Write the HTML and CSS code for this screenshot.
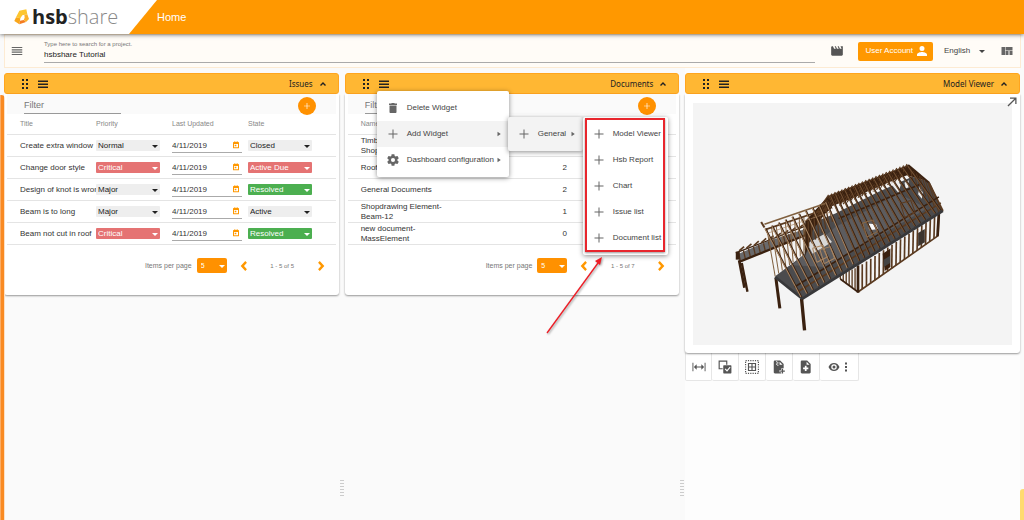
FILE: index.html
```html
<!DOCTYPE html>
<html lang="en">
<head>
<meta charset="utf-8">
<title>hsbshare</title>
<link rel="stylesheet" href="styles.css">
</head>
<body>
<svg class="sprite" aria-hidden="true">
  <symbol id="i-menu" viewBox="0 0 24 24"><path d="M3 5h18v2H3zM3 9h18v2H3zM3 13h18v2H3zM3 17h18v2H3z"/></symbol>
  <symbol id="i-bars" viewBox="0 0 24 24"><path d="M2 5h20v3H2zM2 11h20v3H2zM2 17h20v3H2z"/></symbol>
  <symbol id="i-drag" viewBox="0 0 16 24"><path d="M2 2h4v4H2zM10 2h4v4h-4zM2 10h4v4H2zM10 10h4v4h-4zM2 18h4v4H2zM10 18h4v4h-4z"/></symbol>
  <symbol id="i-up" viewBox="0 0 24 24"><path d="M12 6l-9 9 3 3 6-6 6 6 3-3z"/></symbol>
  <symbol id="i-left" viewBox="0 0 24 24"><path d="M19 4l-4-4L4 12l11 12 4-4-7-8z"/></symbol>
  <symbol id="i-right" viewBox="0 0 24 24"><path d="M5 4l4-4 11 12L9 24l-4-4 7-8z"/></symbol>
  <symbol id="i-plus" viewBox="0 0 24 24"><path d="M21 13h-8v8h-2v-8H3v-2h8V3h2v8h8z"/></symbol>
  <symbol id="i-trash" viewBox="0 0 24 24"><path d="M5 20c0 1.100.9 2 2 2h10c1.100 0 2-.9 2-2V7H5zM20 3h-4.500l-1-1h-5l-1 1H4v3h16z"/></symbol>
  <symbol id="i-gear" viewBox="0 0 24 24"><path fill-rule="evenodd" d="M19.430 12.980c.04-.32.07-.64.07-.98s-.03-.66-.07-.98l2.110-1.650c.19-.15.24-.42.12-.64l-2-3.460c-.12-.22-.39-.3-.61-.22l-2.490 1c-.52-.4-1.080-.73-1.690-.98l-.38-2.650C14.460 2.180 14.250 2 14 2h-4c-.25 0-.46.18-.49.42l-.38 2.650c-.61.25-1.170.59-1.690.98l-2.490-1c-.23-.09-.49 0-.61.22l-2 3.460c-.13.22-.07.49.12.64l2.110 1.650c-.04.32-.07.65-.07.98s.03.66.07.98l-2.110 1.650c-.19.15-.24.42-.12.64l2 3.460c.12.22.39.3.61.22l2.490-1c.52.4 1.080.73 1.690.98l.38 2.650c.03.24.24.42.49.42h4c.25 0 .46-.18.49-.42l.38-2.650c.61-.25 1.170-.59 1.690-.98l2.490 1c.23.09.49 0 .61-.22l2-3.460c.12-.22.07-.49-.12-.64zM12 15.500a3.500 3.500 0 1 1 0-7 3.500 3.500 0 0 1 0 7z"/></symbol>
  <symbol id="i-play" viewBox="0 0 24 24"><path d="M6 3l13 9-13 9z"/></symbol>
  <symbol id="i-movie" viewBox="0 0 24 24"><path d="M18 4l2 4h-3l-2-4h-2l2 4h-3l-2-4H8l2 4H7L5 4H4c-1.100 0-2 .9-2 2v12c0 1.100.9 2 2 2h16c1.100 0 2-.9 2-2V4z"/></symbol>
  <symbol id="i-person" viewBox="0 0 24 24"><path d="M12 12a5 5 0 1 0 0-10 5 5 0 0 0 0 10zm0 2c-3.300 0-10 1.700-10 5v3h20v-3c0-3.300-6.700-5-10-5z"/></symbol>
  <symbol id="i-quilt" viewBox="0 0 24 24"><path d="M1 4h7v16H1zM9 12h6v8H9zM17 12h6v8h-6zM9 4h14v7H9z"/></symbol>
  <symbol id="i-cal" viewBox="0 0 24 24"><path fill-rule="evenodd" d="M19 3h-2V1h-3v2h-4V1H7v2H5c-1.100 0-2 .9-2 2v15c0 1.100.9 2 2 2h14c1.100 0 2-.9 2-2V5c0-1.100-.9-2-2-2zm-1 16H6V9h12zM8 11h5v5H8z"/></symbol>
  <symbol id="i-expand" viewBox="0 0 24 24"><path d="M8 3h13v13h-2.500V7.300L4.800 21 3 19.200 16.700 5.500H8z"/></symbol>
  <symbol id="i-width" viewBox="0 0 30 24"><path d="M1 3h2v18H1zM27 3h2v18h-2zM4 12l6-6v5h10V6l6 6-6 6v-5H10v5z"/></symbol>
  <symbol id="i-select" viewBox="0 0 24 24"><path fill-rule="evenodd" d="M1 1h15v7h-2V3H3v11h5v2H1zM10 9h12c.6 0 1 .4 1 1v12c0 .6-.4 1-1 1H10c-.6 0-1-.4-1-1V10c0-.6.4-1 1-1zm1.500 7l4 4 6-7-1.500-1.300-4.600 5.300-2.500-2.500z"/></symbol>
  <symbol id="i-area" viewBox="0 0 24 24"><path fill-rule="evenodd" d="M5 5h14v14H5zm2 2v4h4V7zm6 0v4h4V7zm-6 6v4h4v-4zm6 0v4h4v-4z"/><path fill="none" stroke="currentColor" stroke-width="2" stroke-dasharray="2 2" d="M1 1h22v22H1z"/></symbol>
  <symbol id="i-zip" viewBox="0 0 24 24"><path fill-rule="evenodd" d="M5 1h9l6 6v7h-4v3h-3v4h3v2H5c-1 0-2-1-2-2V3c0-1 1-2 2-2zm8 2v5h5zM7 2h2v2H7zm2 2h2v2H9zM7 6h2v2H7zm2 2h2v2H9z"/><path d="M17 15h2v3h3v2h-3v3h-2v-3h-3v-2h3z"/></symbol>
  <symbol id="i-file" viewBox="0 0 24 24"><path fill-rule="evenodd" d="M5 1h9l6 6v14c0 1-1 2-2 2H5c-1 0-2-1-2-2V3c0-1 1-2 2-2zm8 2v5h5zm-3 7v3H7v3h3v3h3v-3h3v-3h-3v-3z"/></symbol>
  <symbol id="i-eye" viewBox="0 0 24 24"><path fill-rule="evenodd" d="M12 4C7 4 2.700 7.300 1 12c1.700 4.700 6 8 11 8s9.300-3.300 11-8c-1.700-4.700-6-8-11-8zm0 13.500a5.500 5.500 0 1 1 0-11 5.500 5.500 0 0 1 0 11zM12 9a3 3 0 1 0 0 6 3 3 0 0 0 0-6z"/></symbol>
  <symbol id="i-more" viewBox="0 0 8 24"><path d="M2 3h4v4H2zM2 10h4v4H2zM2 17h4v4H2z"/></symbol>
</svg>

<header class="header">
  <a class="logo" href="#" aria-label="hsbshare">
    <svg class="logo-mark" viewBox="0 0 45 48" aria-hidden="true">
      <path fill="#fdc62f" d="M16 5L37 1l3 15-15 3-6 9-13-3z"/><path fill="#f9a61a" d="M6 25l13 3-1 7-2 11L1 36z"/><path fill="#f47c20" d="M16 46l2-11 11-2 7 6z"/><path fill="#fbb02a" d="M40 16l5 14-9 9-7-6 3-7-1-9z"/>
    </svg>
    <span class="logo-text"><b>hsb</b><span>share</span></span>
  </a>
  <nav><a class="nav-link" href="#">Home</a></nav>
</header>

<section class="toolbar">
  <button class="icon-button" aria-label="Menu"><svg class="icon i14"><use href="#i-menu"/></svg></button>
  <div class="search">
    <label for="project">Type here to search for a project.</label>
    <input id="project" type="text" value="hsbshare Tutorial">
  </div>
  <button class="icon-button movie" aria-label="Videos"><svg class="icon i14"><use href="#i-movie"/></svg></button>
  <button class="account">User Account <svg class="icon i12"><use href="#i-person"/></svg></button>
  <span class="select language"><select aria-label="Language"><option>English</option></select></span>
  <button class="icon-button" aria-label="Layout"><svg class="icon i12"><use href="#i-quilt"/></svg></button>
</section>

<main class="dashboard">
  <section class="panel">
    <header class="panel-bar">
      <button class="icon-button" aria-label="Move"><svg class="icon drag"><use href="#i-drag"/></svg></button>
      <button class="icon-button" aria-label="Widget menu"><svg class="icon i12"><use href="#i-bars"/></svg></button>
      <h2>Issues</h2>
      <button class="icon-button" aria-label="Collapse"><svg class="icon i8"><use href="#i-up"/></svg></button>
    </header>
    <div class="card">
      <div class="filter"><input type="text" placeholder="Filter" aria-label="Filter issues"><button class="add" aria-label="Add issue"><svg class="icon i8"><use href="#i-plus"/></svg></button></div>
      <table class="issues">
        <thead><tr><th>Title</th><th>Priority</th><th>Last Updated</th><th>State</th></tr></thead>
        <tbody>
          <tr><td>Create extra window</td><td><span class="select"><select aria-label="Priority"><option>Normal</option></select></span></td><td><span class="date"><input type="text" value="4/11/2019" aria-label="Last updated"><button class="icon-button" aria-label="Pick date"><svg class="icon i8"><use href="#i-cal"/></svg></button></span></td><td><span class="select"><select aria-label="State"><option>Closed</option></select></span></td></tr>
          <tr><td>Change door style</td><td><span class="select red"><select aria-label="Priority"><option>Critical</option></select></span></td><td><span class="date"><input type="text" value="4/11/2019" aria-label="Last updated"><button class="icon-button" aria-label="Pick date"><svg class="icon i8"><use href="#i-cal"/></svg></button></span></td><td><span class="select red"><select aria-label="State"><option>Active Due</option></select></span></td></tr>
          <tr><td>Design of knot is wrong</td><td><span class="select"><select aria-label="Priority"><option>Major</option></select></span></td><td><span class="date"><input type="text" value="4/11/2019" aria-label="Last updated"><button class="icon-button" aria-label="Pick date"><svg class="icon i8"><use href="#i-cal"/></svg></button></span></td><td><span class="select green"><select aria-label="State"><option>Resolved</option></select></span></td></tr>
          <tr><td>Beam is to long</td><td><span class="select"><select aria-label="Priority"><option>Major</option></select></span></td><td><span class="date"><input type="text" value="4/11/2019" aria-label="Last updated"><button class="icon-button" aria-label="Pick date"><svg class="icon i8"><use href="#i-cal"/></svg></button></span></td><td><span class="select"><select aria-label="State"><option>Active</option></select></span></td></tr>
          <tr><td>Beam not cut in roof</td><td><span class="select red"><select aria-label="Priority"><option>Critical</option></select></span></td><td><span class="date"><input type="text" value="4/11/2019" aria-label="Last updated"><button class="icon-button" aria-label="Pick date"><svg class="icon i8"><use href="#i-cal"/></svg></button></span></td><td><span class="select green"><select aria-label="State"><option>Resolved</option></select></span></td></tr>
        </tbody>
      </table>
      <footer class="pager">
        <label for="size1">Items per page</label>
        <span class="select orange"><select id="size1"><option>5</option></select></span>
        <button class="icon-button" aria-label="Previous page"><svg class="icon i10"><use href="#i-left"/></svg></button>
        <span class="range">1 - 5 of 5</span>
        <button class="icon-button" aria-label="Next page"><svg class="icon i10"><use href="#i-right"/></svg></button>
      </footer>
    </div>
  </section>

  <div class="gutter"><span class="grip"></span></div>

  <section class="panel">
    <header class="panel-bar">
      <button class="icon-button" aria-label="Move"><svg class="icon drag"><use href="#i-drag"/></svg></button>
      <button class="icon-button" aria-label="Widget menu"><svg class="icon i12"><use href="#i-bars"/></svg></button>
      <h2>Documents</h2>
      <button class="icon-button" aria-label="Collapse"><svg class="icon i8"><use href="#i-up"/></svg></button>
    </header>
    <div class="card">
      <div class="filter"><input type="text" placeholder="Filter" aria-label="Filter documents"><button class="add" aria-label="Add document"><svg class="icon i8"><use href="#i-plus"/></svg></button></div>
      <table class="documents">
        <thead><tr><th>Name</th><th></th><th></th></tr></thead>
        <tbody>
          <tr><td>Timber<br>Shop</td><td></td><td></td></tr>
          <tr><td>Roof</td><td>2</td><td></td></tr>
          <tr><td>General Documents</td><td>2</td><td></td></tr>
          <tr><td>Shopdrawing Element-<br>Beam-12</td><td>1</td><td></td></tr>
          <tr><td>new document-<br>MassElement</td><td>0</td><td></td></tr>
        </tbody>
      </table>
      <footer class="pager">
        <label for="size2">Items per page</label>
        <span class="select orange"><select id="size2"><option>5</option></select></span>
        <button class="icon-button" aria-label="Previous page"><svg class="icon i10"><use href="#i-left"/></svg></button>
        <span class="range">1 - 5 of 7</span>
        <button class="icon-button" aria-label="Next page"><svg class="icon i10"><use href="#i-right"/></svg></button>
      </footer>
    </div>

    <div class="menu menu-root">
      <button class="menu-item"><svg class="icon i12"><use href="#i-trash"/></svg><span>Delete Widget</span></button>
      <button class="menu-item active"><svg class="icon i12"><use href="#i-plus"/></svg><span>Add Widget</span><svg class="icon i6"><use href="#i-play"/></svg></button>
      <button class="menu-item"><svg class="icon i14"><use href="#i-gear"/></svg><span>Dashboard configuration</span><svg class="icon i6"><use href="#i-play"/></svg></button>
    </div>
    <div class="menu menu-general">
      <button class="menu-item active"><svg class="icon i12"><use href="#i-plus"/></svg><span>General</span><svg class="icon i6"><use href="#i-play"/></svg></button>
    </div>
    <div class="menu menu-widgets">
      <button class="menu-item"><svg class="icon i12"><use href="#i-plus"/></svg><span>Model Viewer</span></button>
      <button class="menu-item"><svg class="icon i12"><use href="#i-plus"/></svg><span>Hsb Report</span></button>
      <button class="menu-item"><svg class="icon i12"><use href="#i-plus"/></svg><span>Chart</span></button>
      <button class="menu-item"><svg class="icon i12"><use href="#i-plus"/></svg><span>Issue list</span></button>
      <button class="menu-item"><svg class="icon i12"><use href="#i-plus"/></svg><span>Document list</span></button>
      <span class="highlight"></span>
    </div>
    <svg class="pointer" viewBox="0 0 60 80" aria-hidden="true"><path stroke="#ee1c25" stroke-width="1.300" d="M2 77L53 7"/><path fill="#ee1c25" d="M57 1l-2 8-5-4z"/></svg>
  </section>

  <div class="gutter"><span class="grip"></span></div>

  <section class="panel viewer">
    <header class="panel-bar">
      <button class="icon-button" aria-label="Move"><svg class="icon drag"><use href="#i-drag"/></svg></button>
      <button class="icon-button" aria-label="Widget menu"><svg class="icon i12"><use href="#i-bars"/></svg></button>
      <h2>Model Viewer</h2>
      <button class="icon-button" aria-label="Collapse"><svg class="icon i8"><use href="#i-up"/></svg></button>
    </header>
    <div class="card viewer-card">
      <svg class="model" id="model" viewBox="-96 -141 954 726" role="img" aria-label="Timber frame house"></svg>
      <button class="icon-button expand" aria-label="Full screen"><svg class="icon i12"><use href="#i-expand"/></svg></button>
    </div>
    <div class="tools">
      <button aria-label="Measure"><svg class="icon i14"><use href="#i-width"/></svg></button>
      <button aria-label="Select"><svg class="icon i14"><use href="#i-select"/></svg></button>
      <button aria-label="Select all"><svg class="icon i14"><use href="#i-area"/></svg></button>
      <button aria-label="Add archive"><svg class="icon i14"><use href="#i-zip"/></svg></button>
      <button aria-label="Add file"><svg class="icon i14"><use href="#i-file"/></svg></button>
      <button class="wide" aria-label="Visibility"><svg class="icon i12"><use href="#i-eye"/></svg><svg class="icon more"><use href="#i-more"/></svg></button>
    </div>
  </section>
</main>
<span class="edge-left"></span>
<span class="edge-right"></span>
<script src="model.js"></script>
</body>
</html>
```

FILE: styles.css
```css
* { box-sizing: border-box; }
body {
  margin: 0;
  min-height: 100vh;
  display: flex;
  flex-direction: column;
  background: #fafafa;
  color: #333;
  font: 8px/10px "Liberation Sans", Arial, sans-serif;
}
button, input, select { font: inherit; color: inherit; border: 0; padding: 0; margin: 0; background: none; border-radius: 0; min-width: 0; }
input, select { outline: 0; }
a { text-decoration: none; }
.sprite { position: absolute; width: 0; height: 0; }
.icon { fill: currentColor; display: block; flex: none; }
.i6 { width: 6px; height: 6px; }
.i8 { width: 8px; height: 8px; }
.i10 { width: 10px; height: 10px; }
.i12 { width: 12px; height: 12px; }
.i14 { width: 14px; height: 14px; }
.drag { width: 8px; height: 12px; }
.icon-button { display: flex; align-items: center; flex: none; }

.header { display: flex; align-items: center; height: 34px; background: #ff9800; box-shadow: 0 1px 4px rgba(0, 0, 0, .5); position: relative; z-index: 1; }
.logo { display: flex; align-items: center; gap: 3px; width: 157px; height: 34px; padding-left: 14px; background: #fff; clip-path: polygon(0 0, 100% 0, 129px 100%, 0 100%); }
.logo-mark { width: 15px; height: 16px; }
.logo-text { display: flex; font: 20px/32px "Open Sans", "Noto Sans", sans-serif; color: #888; }
.logo-text b { color: #222; }
.logo-text span { font-weight: 300; }
.nav-link { color: #fff; font-size: 11px; line-height: 14px; }

.toolbar { display: flex; align-items: center; margin: 0 3px 0 4px; height: 34px; padding: 0 7px 0 5px; background: #fffcf7; border: 1px solid #fdebd3; color: #666; }
.search { flex: 1; margin: 0 15px 0 20px; display: flex; flex-direction: column; }
.search label { font-size: 6px; line-height: 8px; color: #777; }
.search input { height: 15px; width: 100%; color: #222; border-bottom: 1px solid #aaa; }
.movie { margin-right: 14px; color: #555; }
.account { display: flex; align-items: center; gap: 3px; height: 19px; padding: 0 5px 0 7px; background: #ff9800; color: #fff; border-radius: 2px; white-space: nowrap; }
.select { display: block; position: relative; width: 64px; background: #eee; color: #222; border-radius: 1px; }
.select select { display: block; width: 100%; height: 11px; padding: 0 0 0 2px; appearance: none; }
.select::after { content: ""; position: absolute; right: 2px; top: 50%; margin-top: -1px; border: 3px solid transparent; border-top-color: currentColor; border-bottom: 0; pointer-events: none; }
.select.red { background: #e57373; color: #fff; }
.select.green { background: #4caf50; color: #fff; }
.select.orange { background: #ff9100; color: #fff; width: 30px; border-radius: 2px; }
.select.orange select { height: 15px; padding-left: 4px; font-size: 7px; }
.select.language { background: none; width: 41px; margin: 0 16px 0 11px; color: #444; }
.select.language select { padding: 0; }
.select.language::after { right: 0; }

.dashboard { flex: 1; display: grid; grid-template-columns: minmax(0, 1fr) 6px minmax(0, 1fr) 6px minmax(0, 1fr); margin: 0 4px; }
.panel { position: relative; padding-top: 5px; }
.viewer { background: #fdfdfd; }
.panel-bar { display: flex; align-items: center; height: 21px; padding: 0 11px 0 16px; gap: 8px; background: #ffb733; border: 1px solid #ffa51f; border-radius: 3px; color: #222; }
.panel-bar h2 { flex: 1; margin: 0; text-align: right; font: 8px/12px "Noto Sans", "Open Sans", sans-serif; }
.panel-bar h2 + .icon-button { margin-left: -2px; }
.card { background: #fff; padding: 0 3px 22px; border-radius: 0 0 3px 3px; box-shadow: 0 1px 2px rgba(0, 0, 0, .4); }
.filter { display: flex; justify-content: space-between; height: 20px; padding: 3px 20px 0 17px; background: #fafafa; }
.filter input { width: 97px; height: 17px; font-size: 9px; border-bottom: 1px solid #999; color: #777; }
.filter input::placeholder { color: #777; opacity: 1; }
.add { display: flex; align-items: center; justify-content: center; width: 18px; height: 18px; border-radius: 50%; background: #ff9100; color: #fff; }

table { width: 100%; border-collapse: separate; border-spacing: 0; table-layout: fixed; }
th { height: 21px; padding: 0; border-bottom: 1px solid #e4e4e4; text-align: left; font-weight: 400; font-size: 7px; color: #888; }
td { height: 22px; padding: 0; border-bottom: 1px solid #e4e4e4; white-space: nowrap; }
th:first-child, td:first-child { padding-left: 13px; width: 89px; }
.issues th:nth-child(2), .issues th:nth-child(3) { width: 76px; }
.date { display: flex; align-items: center; justify-content: space-between; width: 70px; height: 14px; padding-right: 2px; border-bottom: 1px solid #aaa; color: #333; }
.date input { width: 48px; height: 12px; }
.date .icon { color: #ff9800; }
.documents th:first-child { width: 197px; }
.documents th:nth-child(2) { width: 40px; }
.documents td:nth-child(2) { text-align: center; }

.pager { display: flex; align-items: center; justify-content: flex-end; padding: 13px 10px 0 0; font-size: 7px; color: #777; }
.pager label { margin-right: 5px; }
.pager .icon-button { color: #ff9800; }
.pager .select { margin-right: 12px; }
.range { width: 67px; text-align: center; font-size: 6px; }

.menu { position: absolute; z-index: 2; background: #fff; border-radius: 2px; box-shadow: 0 1px 5px rgba(0, 0, 0, .45); color: #444; }
.menu-root { left: 32px; top: 23px; width: 132px; padding: 4px 0; }
.menu-general { left: 163px; top: 49px; width: 75px; padding: 4px 0; background: #f3f3f3; }
.menu-widgets { left: 238px; top: 49px; width: 85px; padding: 4px 0; }
.menu-item { display: flex; align-items: center; width: 100%; height: 26px; padding: 0 7px 0 10px; gap: 8px; text-align: left; white-space: nowrap; }
.menu-item span { flex: 1; }
.menu-item .icon { color: #666; }
.menu-item .i14 { margin: 0 -1px; }
.menu-item.active { background: #f3f3f3; }
.menu-item .i6 { margin-left: -6px; }
.highlight { position: absolute; inset: 1px 3px 3px 2px; border: 2px solid #e8262d; box-shadow: 0 1px 2px rgba(0, 0, 0, .4); pointer-events: none; }
.pointer { position: absolute; z-index: 3; left: 200px; top: 188px; width: 60px; height: 80px; filter: drop-shadow(1px 1px 1px rgba(0, 0, 0, .4)); pointer-events: none; }

.gutter { display: flex; align-items: flex-end; justify-content: center; padding-bottom: 22px; }
.grip { width: 4px; height: 18px; background: repeating-linear-gradient(#ccc 0 1px, transparent 1px 3px); }

.viewer-card { position: relative; padding: 9px 8px 8px; }
.model { display: block; width: 100%; background: #f4f4f4; }
.expand { position: absolute; right: 2px; top: 2px; color: #555; }
.tools { display: flex; }
.tools button { display: flex; align-items: center; justify-content: center; gap: 4px; width: 27px; height: 28px; background: #fff; border: 1px solid #e6e6e6; border-top: 0; border-left-width: 0; border-radius: 0 0 2px 2px; color: #555; }
.tools button:first-child { border-left-width: 1px; }
.tools .wide { width: 39px; padding-right: 3px; }
.more { width: 4px; height: 12px; }

.edge-left { position: absolute; left: 0; top: 95px; bottom: 0; width: 5px; background: linear-gradient(90deg, #fbad66 0 1px, #f98a22 1px 4px, #fde0c4 4px); border-radius: 0 4px 0 0; }
.edge-right { position: absolute; right: 0; bottom: 0; width: 4px; height: 31px; background: #ffdb70; border-radius: 3px 0 0 0; }
```

FILE: model.js
```js
const svg = document.getElementById("model");
const NS = "http://www.w3.org/2000/svg";
const dark = "#3a2110", mid = "#5a3a20", light = "#a98663", slate = "#4b4b4d";

function poly(points, fill) {
  const p = document.createElementNS(NS, "polygon");
  p.setAttribute("points", points);
  p.setAttribute("fill", fill);
  svg.append(p);
}
function line(x1, y1, x2, y2, color, width) {
  const l = document.createElementNS(NS, "path");
  l.setAttribute("d", `M${x1} ${y1}L${x2} ${y2}`);
  l.setAttribute("stroke", color);
  l.setAttribute("stroke-width", width);
  svg.append(l);
}
const mix = (a, b, t) => a + (b - a) * t;

// A row of members spread between a top edge and a bottom edge.
function row(count, top, bottom, color, width) {
  for (let i = 0; i <= count; i++) {
    const t = i / count;
    line(mix(top[0], top[2], t), mix(top[1], top[3], t), mix(bottom[0], bottom[2], t), mix(bottom[1], bottom[3], t), color, width);
  }
}

// Canopy on the left
poly("38,312 125,274 235,238 238,252 130,298 44,334", "#69696b");
row(13, [40, 306, 235, 236], [46, 332, 240, 256], mid, 4);
line(32, 308, 240, 228, dark, 4);
line(42, 335, 242, 254, dark, 7);
for (let x = 48; x < 230; x += 22) line(x - 6, 302 - (x - 48) * 0.37, x + 9, 289 - (x - 48) * 0.37, mid, 5);
line(38, 304, 38, 328, dark, 12);
line(42, 330, 58, 412, dark, 8);
line(50, 338, 67, 424, dark, 7);

// Lower walls
row(6, [345, 372, 398, 350], [345, 386, 398, 425], mid, 4);
row(19, [398, 350, 640, 192], [398, 425, 638, 256], mid, 5);
line(345, 386, 398, 425, dark, 5);
line(398, 425, 638, 256, mid, 5);
line(398, 345, 398, 427, dark, 8);
line(640, 190, 636, 258, dark, 8);
poly("472,310 495,295 495,350 478,362", dark);
poly("475,328 494,316 494,338 475,350", "#444");
poly("578,248 598,236 598,276 578,288", "#3c342e");

// Posts
line(152, 382, 164, 474, dark, 9);
line(229, 445, 238, 540, dark, 10);

// Floor slab and attic
poly("150,378 238,312 245,225 330,190 460,125 560,80 612,95 652,182 232,446", slate);
poly("200,345 330,230 520,130 605,175 300,350", "#5c5c5f");
poly("246,280 300,250 320,275 262,310", "#d8d8d8");
poly("426,220 452,222 458,236 432,240", "#f8f8f8");

// Far roof slope
poly("240,212 310,137 548,45 600,92 545,75 500,92 420,128 330,165 300,190 262,240 240,318", dark);
row(23, [310, 134, 545, 42], [265, 200, 520, 90], mid, 4);
row(8, [310, 165, 240, 220], [322, 215, 240, 300], mid, 4);
poly("320,168 343,159 338,174 322,180", "#f4f4f4");
poly("364,157 385,148 380,155", "#ddd");
for (let x = 420; x < 500; x += 18) poly(`${x},${128 - (x - 420) * 0.4} ${x + 12},${121 - (x - 420) * 0.4} ${x + 8},${130 - (x - 420) * 0.4}`, "#eee");
poly("500,105 514,90 526,104 519,128", "#eee");
poly("537,98 550,90 549,112 541,114", "#eee");
poly("583,108 592,128 589,146 578,132", "#eee");
row(20, [305, 144, 548, 48], [314, 154, 557, 60], dark, 6);
line(340, 205, 590, 100, dark, 5);

// Gable at the far end
row(6, [555, 54, 608, 98], [562, 92, 640, 186], mid, 3);
line(548, 45, 610, 97, dark, 6);
line(610, 97, 652, 182, mid, 6);

// Open end frame
row(8, [125, 235, 236, 198], [150, 378, 236, 310], "#80603f", 3);
line(108, 215, 118, 232, mid, 6);
line(118, 222, 300, 160, "#80603f", 5);
line(120, 238, 310, 174, mid, 5);
line(130, 248, 320, 184, light, 2);

// Purlins
line(208, 410, 640, 140, dark, 5);
line(218, 424, 646, 158, mid, 5);
line(232, 445, 652, 182, "#38383a", 8);
line(150, 380, 232, 446, "#38383a", 8);

// Near roof rafters, each with a lit side
row(9, [121, 235, 303, 155], [229, 440, 385, 342], dark, 5);
row(9, [119, 235, 301, 155], [227, 440, 383, 342], light, 3);
row(16, [318, 138, 549, 48], [403, 332, 645, 180], dark, 5);
row(16, [316, 138, 547, 48], [401, 332, 643, 180], "#755335", 3);

// Roof openings
const frame = (x, y, color) => {
  line(x, y, x + 31, y - 9, color, 3);
  line(x + 13, y + 42, x + 44, y + 26, color, 3);
  line(x, y, x + 13, y + 42, color, 3);
  line(x + 31, y - 9, x + 44, y + 26, color, 3);
};
frame(262, 294, light);
frame(284, 298, light);
frame(412, 218, "#8a6846");
frame(525, 160, mid);
```
